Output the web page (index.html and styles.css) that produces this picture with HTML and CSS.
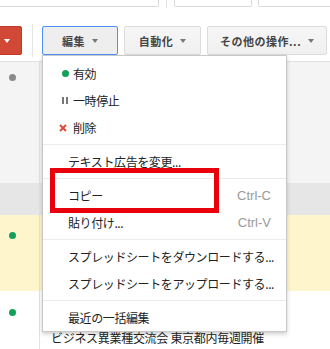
FILE: index.html
```html
<!DOCTYPE html>
<html lang="ja">
<head>
  <meta charset="UTF-8">
  <title>編集メニュー</title>
  <link rel="stylesheet" href="styles.css">
</head>
<body>
  <div class="page">
    <div class="topstrip">
      <div class="tab tab-wide"></div>
      <div class="tab-sep"></div>
      <div class="tab tab-mid"></div>
      <div class="tab tab-rest"></div>
    </div>

    <div class="toolbar">
      <div class="btn btn-red"><span class="caret caret-white"></span></div>
      <div class="tool-sep"></div>
      <div class="btn btn-active">編集<span class="caret"></span></div>
      <div class="btn">自動化<span class="caret"></span></div>
      <div class="btn">その他の操作...<span class="caret"></span></div>
      <div class="btn btn-cut"></div>
    </div>

    <div class="table">
      <div class="row row-grey">
        <div class="cell-status pad-12"><span class="dot dot-grey"></span></div>
        <div class="cell-main"></div>
      </div>
      <div class="row row-dark">
        <div class="cell-status"></div>
        <div class="cell-main"></div>
      </div>
      <div class="row row-yellow">
        <div class="cell-status pad-17"><span class="dot dot-green"></span></div>
        <div class="cell-main"></div>
      </div>
      <div class="row row-white">
        <div class="cell-status pad-18"><span class="dot dot-green"></span></div>
        <div class="cell-main ad">
          <div class="ad-desc">ビジネス異業種交流会 東京都内毎週開催</div>
          <div class="ad-url">異業種交流会 東京 www.koryukai-tokyo.jp</div>
        </div>
      </div>
    </div>

    <!-- dropdown of the 編集 button -->
    <div class="menu">
      <div class="item item-icon"><span class="icon"><span class="dot dot-green"></span></span>有効</div>
      <div class="item item-icon"><span class="icon"><span class="pause"></span></span>一時停止</div>
      <div class="item item-icon">
        <span class="icon">
          <svg class="x-icon" width="8" height="8" viewBox="0 0 8 8"><path d="M1 1L7 7M7 1L1 7" stroke="#dd4b39" stroke-width="2"/></svg>
        </span>削除
      </div>
      <div class="menu-sep"></div>
      <div class="item">テキスト広告を変更...</div>
      <div class="menu-sep"></div>
      <div class="item">コピー<span class="shortcut">Ctrl-C</span></div>
      <div class="item">貼り付け...<span class="shortcut">Ctrl-V</span></div>
      <div class="menu-sep"></div>
      <div class="item">スプレッドシートをダウンロードする...</div>
      <div class="item">スプレッドシートをアップロードする...</div>
      <div class="menu-sep"></div>
      <div class="item">最近の一括編集</div>
    </div>

    <div class="highlight"></div>
  </div>
</body>
</html>
```

FILE: styles.css
```css
body {
  margin: 0;
  font-family: "Noto Sans CJK JP", "Liberation Sans", sans-serif;
  background-color: #fff;
  color: #222;
}
.page {
  position: relative;
  width: 330px;
  height: 349px;
  overflow: hidden;
}

/* bottoms of the controls above */
.topstrip {
  display: flex;
  height: 8px;
}
.tab {
  flex-shrink: 0;
  height: 7px;
  box-sizing: border-box;
  border: 1px solid #dadada;
  border-top: none;
  border-radius: 0 0 2px 2px;
}
.tab-wide {
  width: 160px;
  margin-left: -1px;
}
.tab-sep {
  flex-shrink: 0;
  width: 1px;
  height: 8px;
  margin-left: 7px;
  background-color: #e3e3e3;
}
.tab-mid {
  width: 78px;
  margin-left: 7px;
}
.tab-rest {
  width: 90px;
  margin-left: 6px;
}

/* toolbar */
.toolbar {
  display: flex;
  align-items: flex-start;
  gap: 6px;
  height: 53px;
  box-sizing: border-box;
  padding-top: 18px;
}
.btn {
  display: flex;
  flex-shrink: 0;
  align-items: center;
  justify-content: center;
  height: 29px;
  min-width: 77px;
  box-sizing: border-box;
  padding: 0 12px;
  border: 1px solid #dcdcdc;
  border-radius: 2px;
  background: linear-gradient(#f6f6f6, #f0f0f0);
  font-size: 11px;
  font-weight: bold;
  color: #444;
  letter-spacing: 0.5px;
  white-space: nowrap;
}
.btn-active {
  min-width: 76px;
  border-color: #4d90fe;
  background: #eee;
}
.btn-red {
  min-width: 0;
  width: 32px;
  margin-left: -10px;
  margin-right: 4px;
  padding: 0 0 0 13px;
  justify-content: flex-start;
  background: #d14836;
  border-color: #c53727;
}
.btn-cut {
  min-width: 0;
  width: 20px;
}
.tool-sep {
  flex-shrink: 0;
  width: 1px;
  height: 33px;
  margin-top: -2px;
  margin-right: 3px;
  background-color: #e5e5e5;
}
.caret {
  width: 0;
  height: 0;
  margin-left: 7px;
  border-left: 3px solid transparent;
  border-right: 3px solid transparent;
  border-top: 4px solid #777;
}
.caret-white {
  margin-left: 0;
  border-top-color: #fff;
}

/* table behind the menu */
.table {
  border-top: 1px solid #e0e0e0;
}
.row {
  display: flex;
}
.row-grey {
  height: 121px;
  background-color: #f4f4f4;
}
.row-dark {
  height: 32px;
  background-color: #e6e6e6;
}
.row-yellow {
  height: 76px;
  background-color: #fff5cc;
}
.row-white {
  height: 80px;
  background-color: #fff;
}
.cell-status {
  width: 40px;
  flex-shrink: 0;
  box-sizing: border-box;
  padding-left: 9px;
  border-right: 1px solid #e3e3e3;
}
.pad-12 { padding-top: 12px; }
.pad-17 { padding-top: 17px; }
.pad-18 { padding-top: 18px; }
.cell-main {
  flex: 1;
}
.ad {
  padding: 38px 0 0 11px;
  font-size: 12px;
  line-height: 17px;
  letter-spacing: -0.3px;
}
.ad-desc {
  color: #222;
  white-space: nowrap;
}
.ad-url {
  margin-left: 44px;
  color: #1a8a2e;
  white-space: nowrap;
}
.dot {
  display: block;
  width: 7px;
  height: 7px;
  border-radius: 50%;
}
.dot-grey {
  background-color: #8a8a8a;
}
.dot-green {
  background-color: #14a05a;
}

/* dropdown menu */
.menu {
  position: absolute;
  left: 42px;
  top: 55px;
  width: 245px;
  box-sizing: border-box;
  padding-top: 4px;
  background-color: #fff;
  border: 1px solid #c8c8c8;
  box-shadow: 0 2px 4px rgba(0, 0, 0, 0.2);
}
.item {
  display: flex;
  align-items: center;
  height: 27px;
  padding: 0 15px 0 25px;
  font-size: 12px;
  letter-spacing: -0.4px;
  color: #222;
  white-space: nowrap;
}
.item-icon {
  padding-left: 16px;
}
.icon {
  display: flex;
  align-items: center;
  width: 14px;
  height: 10px;
}
.icon .dot {
  margin-left: 3px;
}
.pause {
  width: 2px;
  height: 7px;
  margin-left: 3px;
  border-left: 2px solid #777;
  border-right: 2px solid #777;
}
.x-icon {
  display: block;
}
.shortcut {
  margin-left: auto;
  font-family: "Liberation Sans", Arial, sans-serif;
  font-size: 13px;
  letter-spacing: 0;
  color: #999;
}
.menu-sep {
  margin: 3px 0;
  border-top: 1px solid #ebebeb;
}

/* red annotation box */
.highlight {
  position: absolute;
  left: 50px;
  top: 168px;
  width: 169px;
  height: 45px;
  box-sizing: border-box;
  border: 5px solid #e8000c;
}
```
